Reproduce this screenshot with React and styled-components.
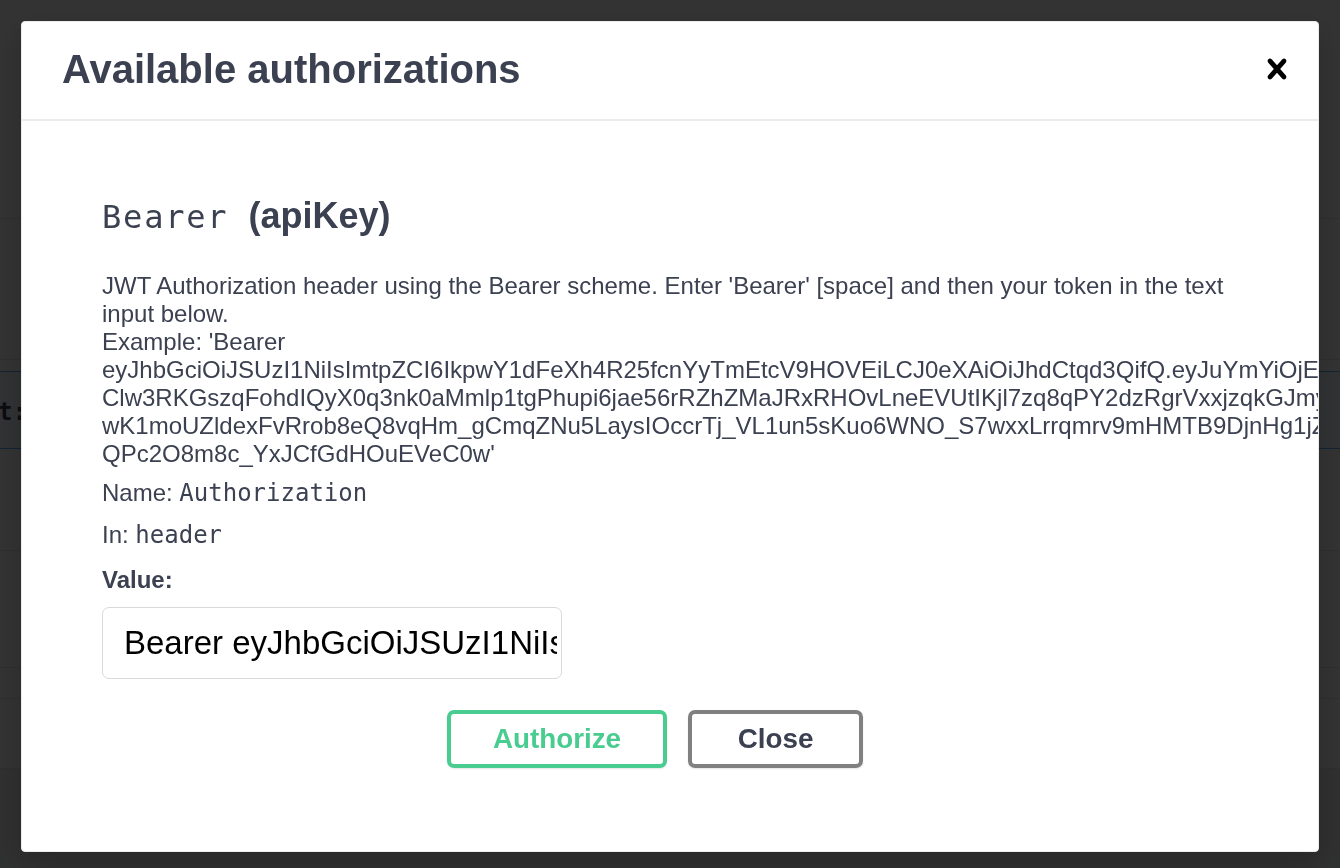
import React from 'react';
import styled, { createGlobalStyle } from 'styled-components';

const Global = createGlobalStyle`
  html, body { margin: 0; padding: 0; }
  body {
    font-family: "Liberation Sans", Arial, Helvetica, sans-serif;
    background: #ffffff;
    overflow: hidden;
  }
  * { box-sizing: border-box; }
`;

/* ---------- page underneath the dialog ---------- */
const Page = styled.div`
  height: 868px;
  display: flex;
  flex-direction: column;
  background: #ffffff;
  overflow: hidden;
`;

const Band = styled.div`
  flex: 0 0 ${(p) => p.$h}px;
  border-bottom: 1px solid ${(p) => p.$line || '#e6e6e6'};
  background: ${(p) => p.$bg || '#ffffff'};
`;

const OpBlock = styled.div`
  flex: 0 0 78px;
  border-top: 1px solid #61affe;
  border-bottom: 1px solid #61affe;
  background: #eff7ff;
  display: flex;
  align-items: center;
`;

const OpText = styled.span`
  font-family: "DejaVu Sans Mono", monospace;
  font-weight: 700;
  font-size: 24px;
  color: #3b4151;
  margin-left: -2px;
  padding-top: 4px;
`;

/* ---------- dialog ---------- */
const Backdrop = styled.div`
  position: fixed;
  inset: 0;
  background: rgba(0, 0, 0, 0.8);
  display: flex;
  padding: 21px 21px 16px 21px;
`;

const Modal = styled.div`
  flex: 1;
  display: flex;
  flex-direction: column;
  background: #ffffff;
  border: 1px solid #ebebeb;
  border-radius: 4px;
  box-shadow: 0 10px 30px 0 rgba(0, 0, 0, 0.2);
  overflow: hidden;
`;

const Header = styled.div`
  flex: 0 0 99px;
  display: flex;
  align-items: center;
  justify-content: space-between;
  padding: 0 21px 3px 40px;
  border-bottom: 2px solid #ebebeb;
`;

const Title = styled.h3`
  margin: 0;
  font-size: 40px;
  line-height: 1;
  font-weight: 700;
  color: #3b4151;
`;

const CloseIcon = styled.button`
  border: none;
  background: none;
  padding: 0;
  width: 40px;
  height: 40px;
  display: flex;
  cursor: pointer;
  svg { width: 40px; height: 40px; fill: #000; }
`;

const Content = styled.div`
  flex: 1;
  padding: 74px 80px 0 80px;
  display: flex;
  flex-direction: column;
`;

const AuthHeading = styled.h4`
  margin: 0 0 34px 0;
  font-size: 36px;
  line-height: 42px;
  font-weight: 700;
  color: #3b4151;
  white-space: nowrap;
`;

const Code = styled.code`
  font-family: "DejaVu Sans Mono", Menlo, monospace;
  font-weight: 400;
  font-size: ${(p) => p.$size || 24}px;
  letter-spacing: ${(p) => p.$ls || 0}px;
  color: #3b4151;
`;

const Description = styled.p`
  margin: 0 0 11px 0;
  font-size: 24px;
  line-height: 28px;
  color: #3b4151;
`;

const Token = styled.span`
  white-space: nowrap;
`;

const InfoRow = styled.p`
  margin: 0 0 14px 0;
  font-size: 24px;
  line-height: 28px;
  color: #3b4151;
`;

const Label = styled.label`
  display: block;
  font-size: 24px;
  line-height: 28px;
  font-weight: 700;
  color: #3b4151;
  margin: 3px 0 13px 0;
`;

const ValueInput = styled.input`
  width: 460px;
  height: 72px;
  padding: 0 4px 0 21px;
  border: 1px solid #d9d9d9;
  border-radius: 7px;
  background: #fff;
  font-family: "Liberation Sans", Arial, sans-serif;
  font-size: 33px;
  color: #000;
  outline: none;
`;

const ButtonRow = styled.div`
  display: flex;
  justify-content: center;
  gap: 21px;
  margin-top: 31px;
`;

const ModalButton = styled.button`
  height: 58px;
  width: ${(p) => p.$w}px;
  border: 4px solid ${(p) => (p.$variant === 'auth' ? '#49cc90' : '#808080')};
  color: ${(p) => (p.$variant === 'auth' ? '#49cc90' : '#3b4151')};
  margin-right: ${(p) => p.$mr || 0}px;
  background: transparent;
  border-radius: 7px;
  box-shadow: 0 1px 2px rgba(0, 0, 0, 0.1);
  font-family: "Liberation Sans", Arial, sans-serif;
  font-weight: 700;
  font-size: 27.8px;
  cursor: pointer;
`;

const TOKEN_LINES = [
  'eyJhbGciOiJSUzI1NiIsImtpZCI6IkpwY1dFeXh4R25fcnYyTmEtcV9HOVEiLCJ0eXAiOiJhdCtqd3QifQ.eyJuYmYiOjE2NDk4MzY0NTQsImV4cCI6MTY0OTg0MDA1NCwiaXNzIjoiaHR0cHM6Ly9sb2NhbGhvc3Q6NTAwMSJ9.a-',
  'Clw3RKGszqFohdIQyX0q3nk0aMmlp1tgPhupi6jae56rRZhZMaJRxRHOvLneEVUtIKjl7zq8qPY2dzRgrVxxjzqkGJmyZ2Tq8vXbNw4LrSkA9hUeY-',
  'wK1moUZldexFvRrob8eQ8vqHm_gCmqZNu5LaysIOccrTj_VL1un5sKuo6WNO_S7wxxLrrqmrv9mHMTB9DjnHg1jZk3pXw7Rq2YtHnVcB5mLd-',
];

export default function App() {
  return (
    <>
      <Global />
      <Page>
        <Band $h={219} />
        <Band $h={141} />
        <Band $h={11} $line="transparent" />
        <OpBlock>
          <OpText>t:</OpText>
        </OpBlock>
        <Band $h={102} />
        <Band $h={117} />
        <Band $h={31} />
        <Band $h={70} />
        <Band $h={100} $line="transparent" $bg="#eceef0" />
      </Page>
      <Backdrop>
        <Modal role="dialog" aria-label="Available authorizations">
          <Header>
            <Title>Available authorizations</Title>
            <CloseIcon aria-label="Close">
              <svg viewBox="0 0 20 20" aria-hidden="true">
                <path d="M14.348 14.849c-.469.469-1.229.469-1.697 0L10 11.819l-2.651 3.029c-.469.469-1.229.469-1.697 0-.469-.469-.469-1.229 0-1.697l2.758-3.15-2.759-3.152c-.469-.469-.469-1.228 0-1.697.469-.469 1.228-.469 1.697 0L10 8.183l2.651-3.031c.469-.469 1.228-.469 1.697 0 .469.469.469 1.229 0 1.697l-2.758 3.152 2.758 3.15c.469.469.469 1.229 0 1.698z" />
              </svg>
            </CloseIcon>
          </Header>
          <Content>
            <AuthHeading>
              <Code $size={32} $ls={1.8}>Bearer</Code>{'\u00a0 '}(apiKey)
            </AuthHeading>
            <Description>
              JWT Authorization header using the Bearer scheme. Enter 'Bearer' [space] and then your token in the text input below.
              <br />
              Example: 'Bearer
              <br />
              <Token>{TOKEN_LINES[0]}</Token>
              <br />
              <Token>{TOKEN_LINES[1]}</Token>
              <br />
              <Token>{TOKEN_LINES[2]}</Token>
              <br />
              <Token>QPc2O8m8c_YxJCfGdHOuEVeC0w'</Token>
            </Description>
            <InfoRow>
              Name: <Code>Authorization</Code>
            </InfoRow>
            <InfoRow>
              In: <Code>header</Code>
            </InfoRow>
            <Label htmlFor="auth-value">Value:</Label>
            <ValueInput
              id="auth-value"
              type="text"
              defaultValue="Bearer eyJhbGciOiJSUzI1NiIsImtpZCI6IkpwY1dFeXh4R25fcnYyTmEtcV9HOVEiLCJ0eXAiOiJhdCtqd3QifQ"
            />
            <ButtonRow>
              <ModalButton $variant="auth" $w={220}>Authorize</ModalButton>
              <ModalButton $variant="close" $w={175} $mr={30}>Close</ModalButton>
            </ButtonRow>
          </Content>
        </Modal>
      </Backdrop>
    </>
  );
}
